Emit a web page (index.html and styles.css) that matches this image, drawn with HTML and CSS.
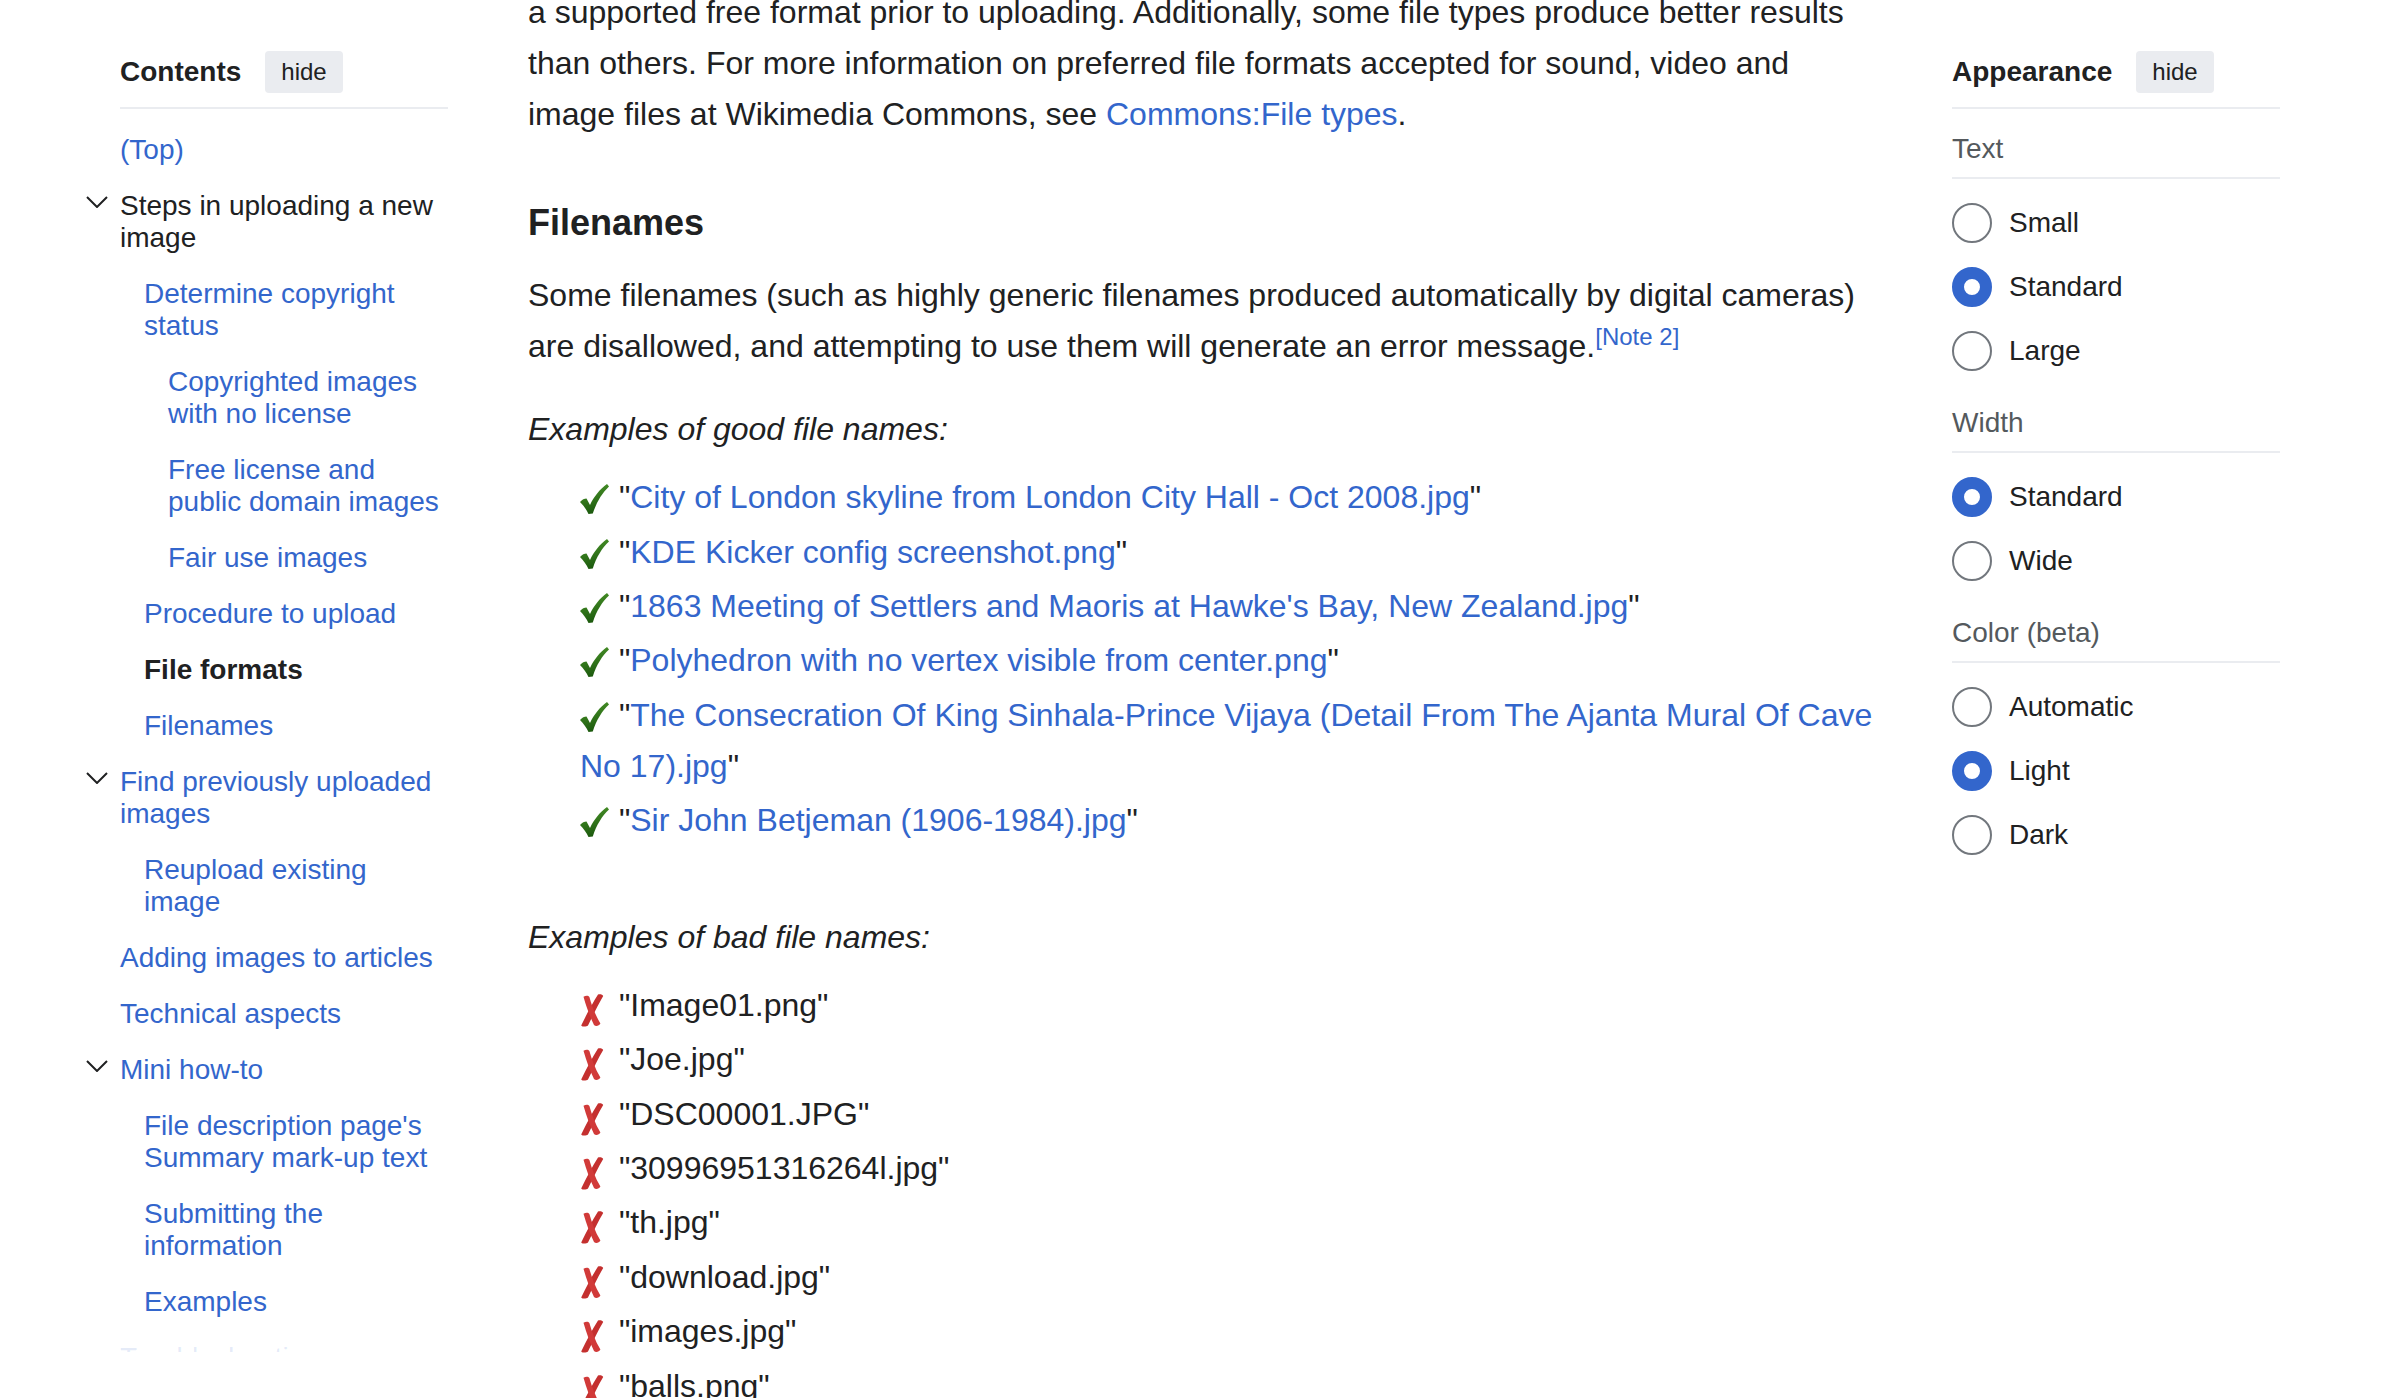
FILE: index.html
```html
<!DOCTYPE html>
<html lang="en">
<head>
<meta charset="utf-8">
<title>Help:Files</title>
<link rel="stylesheet" href="styles.css">
</head>
<body>
<div class="page">
  <nav class="toc">
    <div class="panel-head">
      <span class="panel-title">Contents</span>
      <button class="hide-btn">hide</button>
    </div>
    <ul class="toc-list">
      <li class="toc-item"><a>(Top)</a></li>
      <li class="toc-item has-toggle"><span class="toggle"><svg width="22" height="12" viewBox="0 0 22 12"><path d="M1 1 L11 11 L21 1" fill="none" stroke="#202122" stroke-width="2"/></svg></span><span class="dark">Steps in uploading a new image</span></li>
      <li class="toc-item lv2"><a>Determine copyright status</a></li>
      <li class="toc-item lv3"><a>Copyrighted images with no license</a></li>
      <li class="toc-item lv3"><a>Free license and public domain images</a></li>
      <li class="toc-item lv3"><a>Fair use images</a></li>
      <li class="toc-item lv2"><a>Procedure to upload</a></li>
      <li class="toc-item lv2"><span class="active">File formats</span></li>
      <li class="toc-item lv2"><a>Filenames</a></li>
      <li class="toc-item has-toggle"><span class="toggle"><svg width="22" height="12" viewBox="0 0 22 12"><path d="M1 1 L11 11 L21 1" fill="none" stroke="#202122" stroke-width="2"/></svg></span><a>Find previously uploaded images</a></li>
      <li class="toc-item lv2"><a>Reupload existing image</a></li>
      <li class="toc-item"><a>Adding images to articles</a></li>
      <li class="toc-item"><a>Technical aspects</a></li>
      <li class="toc-item has-toggle"><span class="toggle"><svg width="22" height="12" viewBox="0 0 22 12"><path d="M1 1 L11 11 L21 1" fill="none" stroke="#202122" stroke-width="2"/></svg></span><a>Mini how-to</a></li>
      <li class="toc-item lv2"><a>File description page's Summary mark-up text</a></li>
      <li class="toc-item lv2"><a>Submitting the information</a></li>
      <li class="toc-item lv2"><a>Examples</a></li>
      <li class="toc-item faded"><a>Troubleshooting</a></li>
    </ul>
  </nav>

  <main class="content">
    <p class="p-first">a supported free format prior to uploading. Additionally, some file types produce better results than others. For more information on preferred file formats accepted for sound, video and image files at Wikimedia Commons, see <a>Commons:File types</a>.</p>
    <h3 class="heading">Filenames</h3>
    <p class="p-intro">Some filenames (such as highly generic filenames produced automatically by digital cameras) are disallowed, and attempting to use them will generate an error message.<sup class="note"><a>[Note 2]</a></sup></p>
    <p class="ex-good"><i>Examples of good file names:</i></p>
    <ul class="files">
      <li><svg class="icon-check" width="30" height="30" viewBox="0 0 30 30"><defs><linearGradient id="g" x1="0" y1="0" x2="0.3" y2="1"><stop offset="0" stop-color="#4f9a2c"/><stop offset="1" stop-color="#1c5a0e"/></linearGradient></defs><path d="M0 18 C2 15.5 4.5 14.5 6.5 14.5 L10 21 C14 12.5 20 5 27 0 L29 2.5 C22 9 16.5 18 12.8 29.5 L8.5 30 C6.5 25.5 3.5 21.5 0 18 Z" fill="url(#g)"/></svg> "<a>City of London skyline from London City Hall - Oct 2008.jpg</a>"</li>
      <li><svg class="icon-check" width="30" height="30" viewBox="0 0 30 30"><path d="M0 18 C2 15.5 4.5 14.5 6.5 14.5 L10 21 C14 12.5 20 5 27 0 L29 2.5 C22 9 16.5 18 12.8 29.5 L8.5 30 C6.5 25.5 3.5 21.5 0 18 Z" fill="url(#g)"/></svg> "<a>KDE Kicker config screenshot.png</a>"</li>
      <li><svg class="icon-check" width="30" height="30" viewBox="0 0 30 30"><path d="M0 18 C2 15.5 4.5 14.5 6.5 14.5 L10 21 C14 12.5 20 5 27 0 L29 2.5 C22 9 16.5 18 12.8 29.5 L8.5 30 C6.5 25.5 3.5 21.5 0 18 Z" fill="url(#g)"/></svg> "<a>1863 Meeting of Settlers and Maoris at Hawke's Bay, New Zealand.jpg</a>"</li>
      <li><svg class="icon-check" width="30" height="30" viewBox="0 0 30 30"><path d="M0 18 C2 15.5 4.5 14.5 6.5 14.5 L10 21 C14 12.5 20 5 27 0 L29 2.5 C22 9 16.5 18 12.8 29.5 L8.5 30 C6.5 25.5 3.5 21.5 0 18 Z" fill="url(#g)"/></svg> "<a>Polyhedron with no vertex visible from center.png</a>"</li>
      <li><svg class="icon-check" width="30" height="30" viewBox="0 0 30 30"><path d="M0 18 C2 15.5 4.5 14.5 6.5 14.5 L10 21 C14 12.5 20 5 27 0 L29 2.5 C22 9 16.5 18 12.8 29.5 L8.5 30 C6.5 25.5 3.5 21.5 0 18 Z" fill="url(#g)"/></svg> "<a>The Consecration Of King Sinhala-Prince Vijaya (Detail From The Ajanta Mural Of Cave No 17).jpg</a>"</li>
      <li><svg class="icon-check" width="30" height="30" viewBox="0 0 30 30"><path d="M0 18 C2 15.5 4.5 14.5 6.5 14.5 L10 21 C14 12.5 20 5 27 0 L29 2.5 C22 9 16.5 18 12.8 29.5 L8.5 30 C6.5 25.5 3.5 21.5 0 18 Z" fill="url(#g)"/></svg> "<a>Sir John Betjeman (1906-1984).jpg</a>"</li>
    </ul>
    <p class="ex-bad"><i>Examples of bad file names:</i></p>
    <ul class="files">
      <li><svg class="icon-x" width="30" height="33" viewBox="0 0 30 33"><path d="M18 0.5 C20 -0.2 22.5 0.3 23.2 2 C18.5 10 13.5 20 8 31.5 C6.2 33 2.4 33 1.2 31.4 C6.6 20.4 12 10 18 0.5 Z" fill="#c4302f"/><path d="M3.5 2.8 C5.8 1.2 8.4 1.4 9.4 3 C11.6 11 15 20.4 20.4 29.6 C19.2 32 15.6 32.6 14 31 C9.8 22.4 6.2 12.6 3.5 2.8 Z" fill="#d13a39"/></svg> "Image01.png"</li>
      <li><svg class="icon-x" width="30" height="33" viewBox="0 0 30 33"><path d="M18 0.5 C20 -0.2 22.5 0.3 23.2 2 C18.5 10 13.5 20 8 31.5 C6.2 33 2.4 33 1.2 31.4 C6.6 20.4 12 10 18 0.5 Z" fill="#c4302f"/><path d="M3.5 2.8 C5.8 1.2 8.4 1.4 9.4 3 C11.6 11 15 20.4 20.4 29.6 C19.2 32 15.6 32.6 14 31 C9.8 22.4 6.2 12.6 3.5 2.8 Z" fill="#d13a39"/></svg> "Joe.jpg"</li>
      <li><svg class="icon-x" width="30" height="33" viewBox="0 0 30 33"><path d="M18 0.5 C20 -0.2 22.5 0.3 23.2 2 C18.5 10 13.5 20 8 31.5 C6.2 33 2.4 33 1.2 31.4 C6.6 20.4 12 10 18 0.5 Z" fill="#c4302f"/><path d="M3.5 2.8 C5.8 1.2 8.4 1.4 9.4 3 C11.6 11 15 20.4 20.4 29.6 C19.2 32 15.6 32.6 14 31 C9.8 22.4 6.2 12.6 3.5 2.8 Z" fill="#d13a39"/></svg> "DSC00001.JPG"</li>
      <li><svg class="icon-x" width="30" height="33" viewBox="0 0 30 33"><path d="M18 0.5 C20 -0.2 22.5 0.3 23.2 2 C18.5 10 13.5 20 8 31.5 C6.2 33 2.4 33 1.2 31.4 C6.6 20.4 12 10 18 0.5 Z" fill="#c4302f"/><path d="M3.5 2.8 C5.8 1.2 8.4 1.4 9.4 3 C11.6 11 15 20.4 20.4 29.6 C19.2 32 15.6 32.6 14 31 C9.8 22.4 6.2 12.6 3.5 2.8 Z" fill="#d13a39"/></svg> "30996951316264l.jpg"</li>
      <li><svg class="icon-x" width="30" height="33" viewBox="0 0 30 33"><path d="M18 0.5 C20 -0.2 22.5 0.3 23.2 2 C18.5 10 13.5 20 8 31.5 C6.2 33 2.4 33 1.2 31.4 C6.6 20.4 12 10 18 0.5 Z" fill="#c4302f"/><path d="M3.5 2.8 C5.8 1.2 8.4 1.4 9.4 3 C11.6 11 15 20.4 20.4 29.6 C19.2 32 15.6 32.6 14 31 C9.8 22.4 6.2 12.6 3.5 2.8 Z" fill="#d13a39"/></svg> "th.jpg"</li>
      <li><svg class="icon-x" width="30" height="33" viewBox="0 0 30 33"><path d="M18 0.5 C20 -0.2 22.5 0.3 23.2 2 C18.5 10 13.5 20 8 31.5 C6.2 33 2.4 33 1.2 31.4 C6.6 20.4 12 10 18 0.5 Z" fill="#c4302f"/><path d="M3.5 2.8 C5.8 1.2 8.4 1.4 9.4 3 C11.6 11 15 20.4 20.4 29.6 C19.2 32 15.6 32.6 14 31 C9.8 22.4 6.2 12.6 3.5 2.8 Z" fill="#d13a39"/></svg> "download.jpg"</li>
      <li><svg class="icon-x" width="30" height="33" viewBox="0 0 30 33"><path d="M18 0.5 C20 -0.2 22.5 0.3 23.2 2 C18.5 10 13.5 20 8 31.5 C6.2 33 2.4 33 1.2 31.4 C6.6 20.4 12 10 18 0.5 Z" fill="#c4302f"/><path d="M3.5 2.8 C5.8 1.2 8.4 1.4 9.4 3 C11.6 11 15 20.4 20.4 29.6 C19.2 32 15.6 32.6 14 31 C9.8 22.4 6.2 12.6 3.5 2.8 Z" fill="#d13a39"/></svg> "images.jpg"</li>
      <li><svg class="icon-x" width="30" height="33" viewBox="0 0 30 33"><path d="M18 0.5 C20 -0.2 22.5 0.3 23.2 2 C18.5 10 13.5 20 8 31.5 C6.2 33 2.4 33 1.2 31.4 C6.6 20.4 12 10 18 0.5 Z" fill="#c4302f"/><path d="M3.5 2.8 C5.8 1.2 8.4 1.4 9.4 3 C11.6 11 15 20.4 20.4 29.6 C19.2 32 15.6 32.6 14 31 C9.8 22.4 6.2 12.6 3.5 2.8 Z" fill="#d13a39"/></svg> "balls.png"</li>
    </ul>
  </main>

  <aside class="appearance">
    <div class="panel-head">
      <span class="panel-title">Appearance</span>
      <button class="hide-btn">hide</button>
    </div>
    <div class="app-section">
      <div class="app-label">Text</div>
      <div class="radio-list">
        <label class="radio"><span class="circle"></span>Small</label>
        <label class="radio"><span class="circle checked"></span>Standard</label>
        <label class="radio"><span class="circle"></span>Large</label>
      </div>
    </div>
    <div class="app-section">
      <div class="app-label">Width</div>
      <div class="radio-list">
        <label class="radio"><span class="circle checked"></span>Standard</label>
        <label class="radio"><span class="circle"></span>Wide</label>
      </div>
    </div>
    <div class="app-section">
      <div class="app-label">Color (beta)</div>
      <div class="radio-list">
        <label class="radio"><span class="circle"></span>Automatic</label>
        <label class="radio"><span class="circle checked"></span>Light</label>
        <label class="radio"><span class="circle"></span>Dark</label>
      </div>
    </div>
  </aside>
</div>
</body>
</html>
```

FILE: styles.css
```css
html {
  overflow: hidden;
}

body {
  margin: 0;
  background: #ffffff;
  color: #202122;
  font-family: "Liberation Sans", Arial, Helvetica, sans-serif;
}

a {
  color: #3366cc;
  text-decoration: none;
}

.page {
  display: flex;
  align-items: flex-start;
  padding-left: 86px;
}

/* ---------- side panels ---------- */

.toc {
  flex: none;
  width: 362px;
  height: 1352px;
  overflow: hidden;
  padding: 51px 0 0 34px;
  box-sizing: border-box;
}

.appearance {
  flex: none;
  width: 328px;
  margin-left: 74px;
  padding-top: 51px;
}

.panel-head {
  display: flex;
  align-items: center;
  gap: 24px;
  padding-bottom: 14px;
  border-bottom: 2px solid #eaecf0;
}

.panel-title {
  font-size: 28px;
  line-height: 32px;
  font-weight: bold;
}

.hide-btn {
  font-family: inherit;
  font-size: 24px;
  line-height: 28px;
  color: #202122;
  background: #eaecf0;
  border: none;
  border-radius: 4px;
  padding: 7px 16px;
  margin: 0;
}

/* ---------- TOC ---------- */

.toc-list {
  list-style: none;
  margin: 0;
  padding: 13px 0 0 0;
}

.toc-item {
  padding: 12px 0;
  font-size: 28px;
  line-height: 32px;
}

.toc-item.lv2 {
  padding-left: 24px;
}

.toc-item.lv3 {
  padding-left: 48px;
}

.toc-item.has-toggle {
  display: flex;
}

.toggle {
  flex: none;
  width: 34px;
  margin-left: -34px;
  padding-top: 6px;
  height: 26px;
}

.toggle svg {
  display: block;
}

.dark {
  color: #202122;
}

.active {
  color: #202122;
  font-weight: bold;
}

.toc-item.faded a {
  color: rgba(51, 102, 204, 0.14);
}

/* ---------- content ---------- */

.content {
  flex: none;
  width: 1350px;
  margin-left: 80px;
  margin-top: -13px;
  font-size: 32px;
  line-height: 51.2px;
}

.content p {
  margin: 0;
}

.heading {
  margin: 57px 0 0 0;
  font-size: 36px;
  line-height: 50px;
  font-weight: bold;
}

.content .p-intro {
  margin-top: 22px;
}

.note {
  font-size: 24px;
  line-height: 1;
  vertical-align: super;
}

.content .ex-good {
  margin-top: 32px;
}

.content .ex-bad {
  margin-top: 65px;
}

.files {
  list-style: none;
  margin: 17px 0 0 52px;
  padding: 0;
}

.files li {
  margin-bottom: 3.2px;
}

.icon-check {
  vertical-align: -6px;
}

.icon-x {
  vertical-align: -11px;
}

/* ---------- appearance ---------- */

.app-section {
  margin-top: 23px;
}

.app-label {
  font-size: 28px;
  line-height: 32px;
  color: #54595d;
  padding-top: 1px;
  padding-bottom: 12px;
  border-bottom: 2px solid #eaecf0;
}

.radio-list {
  padding-top: 12px;
}

.radio {
  display: flex;
  align-items: center;
  gap: 17px;
  height: 64px;
  font-size: 28px;
  color: #202122;
}

.circle {
  flex: none;
  width: 40px;
  height: 40px;
  box-sizing: border-box;
  border-radius: 50%;
  border: 2px solid #72777d;
  background: #ffffff;
}

.circle.checked {
  border: 12px solid #3366cc;
}
```
